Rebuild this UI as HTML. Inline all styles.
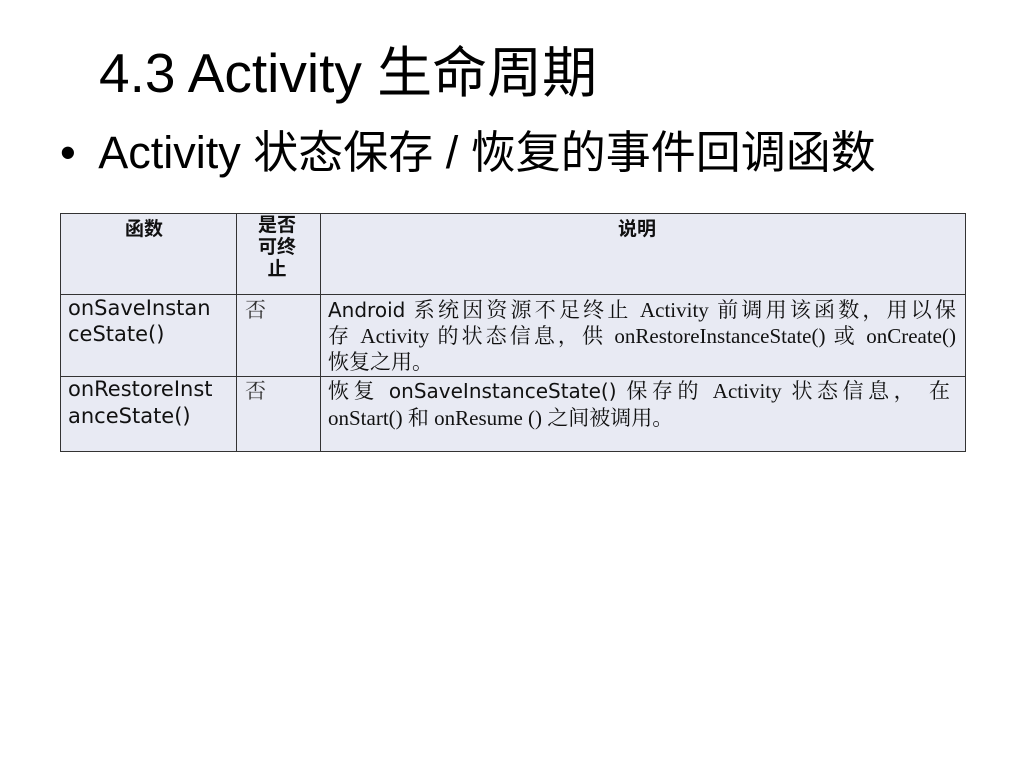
<!DOCTYPE html>
<html><head><meta charset="utf-8"><style>
body{margin:0;width:1024px;height:768px;background:#fff;position:relative;overflow:hidden}
.a{position:absolute;white-space:nowrap}
.t{font-family:"Liberation Sans","Noto Sans CJK SC",sans-serif;color:#000}
.tbl{position:absolute;left:60px;top:213px;width:904px;height:237px;background:#e8eaf3;border:1px solid #333}
.v{position:absolute;top:0;bottom:0;width:1px;background:#333}
.h{position:absolute;left:0;right:0;height:1px;background:#333}
.s{font-family:"DejaVu Sans","Noto Sans CJK SC",sans-serif;font-size:21px;color:#111}
.r{font-family:"Liberation Serif","Noto Serif CJK SC",serif;font-size:21px;color:#111}
.b{font-family:"DejaVu Sans","Noto Sans CJK SC",sans-serif;font-size:19px;font-weight:bold;color:#111}
.j{position:absolute;left:267px;width:628px;white-space:nowrap;text-align:justify;text-align-last:justify}
</style></head><body>
<div class="a t" style="left:99px;top:28px;font-size:55px">4.3 Activity 生命周期</div>
<div class="a t" style="left:60px;top:116px;font-size:45px">•&nbsp; Activity 状态保存 / 恢复的事件回调函数</div>
<div class="tbl">
<div class="v" style="left:175px"></div>
<div class="v" style="left:259px"></div>
<div class="h" style="top:80px"></div>
<div class="h" style="top:162px"></div>
<div class="a b" style="left:64px;top:0px">函数</div>
<div class="a b" style="left:197px;top:0px;line-height:22px;text-align:center">是否<br>可终<br>止</div>
<div class="a b" style="left:557px;top:0px">说明</div>
<div class="a s" style="left:7px;top:81px;line-height:26px">onSaveInstan<br>ceState()</div>
<div class="a r" style="left:184px;top:80px;color:#333">否</div>
<div class="j r" style="top:80px"><span class="s" style="font-size:20px">Android</span> 系统因资源不足终止 Activity 前调用该函数，用以保</div>
<div class="j r" style="top:106px">存 Activity 的状态信息，供 onRestoreInstanceState() 或 onCreate()</div>
<div class="a r" style="left:267px;top:132px">恢复之用。</div>
<div class="a s" style="left:7px;top:162px;line-height:27px">onRestoreInst<br>anceState()</div>
<div class="a r" style="left:184px;top:161px;color:#333">否</div>
<div class="j r" style="top:161px;width:622px">恢复 <span class="s" style="font-size:20px">onSaveInstanceState()</span> 保存的 Activity 状态信息， 在</div>
<div class="a r" style="left:267px;top:188px">onStart() 和 onResume () 之间被调用。</div>
</div>
</body></html>
